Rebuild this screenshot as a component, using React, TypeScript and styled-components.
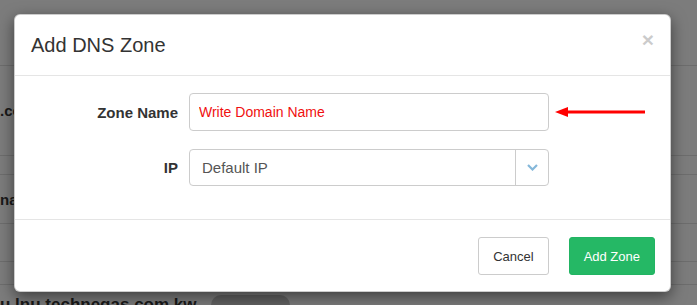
import React from 'react';
import styled, { createGlobalStyle } from 'styled-components';

const GlobalStyle = createGlobalStyle`
  html, body {
    margin: 0;
    padding: 0;
    width: 697px;
    height: 305px;
    overflow: hidden;
    font-family: 'Liberation Sans', Arial, sans-serif;
  }
`;

const Screen = styled.div`
  position: relative;
  width: 697px;
  height: 305px;
  overflow: hidden;
`;

// page behind the modal
const Page = styled.div`
  background: #f8f8f8;
  height: 100%;
  color: #333;
`;

const PageRow = styled.div<{ $h: number }>`
  height: ${(p) => p.$h}px;
  border-bottom: 1px solid #dadada;
  box-sizing: border-box;
  display: flex;
  align-items: center;
  font-weight: bold;
  font-size: 15px;
`;

const LastRow = styled.div`
  display: flex;
  align-items: center;
  gap: 14px;
  padding-top: 10px;
  font-weight: bold;
  font-size: 17px;
`;

const Pill = styled.span`
  display: inline-block;
  width: 79px;
  height: 20px;
  border-radius: 10px;
  background: #c4c4c4;
`;

const Backdrop = styled.div`
  position: absolute;
  inset: 0;
  background: rgba(0, 0, 0, 0.5);
`;

const Modal = styled.div`
  position: absolute;
  left: 14px;
  top: 14px;
  width: 657px;
  box-sizing: border-box;
  background: #fff;
  border: 1px solid rgba(0, 0, 0, 0.2);
  border-radius: 6px;
  box-shadow: 0 5px 15px rgba(0, 0, 0, 0.5);
`;

const Header = styled.div`
  display: flex;
  align-items: center;
  justify-content: space-between;
  padding: 15px 16px 15px 16px;
  border-bottom: 1px solid #e5e5e5;
`;

const Title = styled.h4`
  margin: 0;
  font-size: 20px;
  font-weight: normal;
  line-height: 30px;
  color: #333;
`;

const Close = styled.button`
  border: 0;
  background: none;
  padding: 0;
  margin-top: -12px;
  font-family: 'Liberation Sans', Arial, sans-serif;
  font-size: 21px;
  font-weight: bold;
  line-height: 1;
  color: #000;
  opacity: 0.2;
  cursor: pointer;
`;

const Body = styled.div`
  display: grid;
  grid-template-columns: 163px 360px 1fr;
  column-gap: 11px;
  row-gap: 18px;
  align-items: center;
  padding: 17px 0 33px;
`;

const Label = styled.label`
  text-align: right;
  font-size: 15px;
  font-weight: bold;
  color: #333;
`;

const Input = styled.input`
  box-sizing: border-box;
  width: 100%;
  height: 38px;
  padding: 0 9px;
  border: 1px solid #ccc;
  border-radius: 4px;
  font-family: 'Liberation Sans', Arial, sans-serif;
  font-size: 14px;
  color: #f01010;
  outline: none;
  &::placeholder {
    color: #f01010;
  }
`;

const Select = styled.div`
  box-sizing: border-box;
  display: flex;
  height: 37px;
  border: 1px solid #ccc;
  border-radius: 4px;
`;

const SelectValue = styled.div`
  flex: 1;
  display: flex;
  align-items: center;
  padding-left: 12px;
  font-size: 15px;
  color: #555;
`;

const SelectToggle = styled.div`
  width: 32px;
  border-left: 1px solid #ccc;
  display: flex;
  align-items: center;
  justify-content: center;
`;

const Pointer = styled.svg`
  display: block;
  margin-left: -5px;
`;

const Footer = styled.div`
  display: flex;
  justify-content: flex-end;
  gap: 20px;
  padding: 17px 15px 16px;
  border-top: 1px solid #e5e5e5;
`;

const Button = styled.button<{ $primary?: boolean }>`
  box-sizing: border-box;
  height: 38px;
  padding: 0 14px;
  border-radius: 3px;
  border: 1px solid ${(p) => (p.$primary ? '#22b463' : '#ccc')};
  background: ${(p) => (p.$primary ? '#25b865' : '#fff')};
  color: ${(p) => (p.$primary ? '#fff' : '#333')};
  font-family: 'Liberation Sans', Arial, sans-serif;
  font-size: 13px;
  cursor: pointer;
`;

export default function App() {
  return (
    <Screen>
      <GlobalStyle />
      <Page>
        <PageRow $h={66} />
        <PageRow $h={90}>.com.kw</PageRow>
        <PageRow $h={19} />
        <PageRow $h={49}>name</PageRow>
        <PageRow $h={38} />
        <PageRow $h={23} />
        <LastRow>
          <span>u.lnu.technegas.com.kw</span>
          <Pill />
        </LastRow>
      </Page>
      <Backdrop />
      <Modal>
        <Header>
          <Title>Add DNS Zone</Title>
          <Close aria-label="Close">×</Close>
        </Header>
        <Body>
          <Label>Zone Name</Label>
          <Input placeholder="Write Domain Name" />
          <Pointer width="92" height="12" viewBox="0 0 92 12">
            <polygon points="0,6 13,1 13,11" fill="#f00" />
            <rect x="10" y="4.5" width="80" height="3" fill="#f00" />
          </Pointer>
          <Label>IP</Label>
          <Select>
            <SelectValue>Default IP</SelectValue>
            <SelectToggle>
              <svg width="11" height="7" viewBox="0 0 11 7">
                <polyline points="1,1 5.5,5.5 10,1" fill="none" stroke="#85b8da" strokeWidth="2.2" />
              </svg>
            </SelectToggle>
          </Select>
          <span />
        </Body>
        <Footer>
          <Button>Cancel</Button>
          <Button $primary>Add Zone</Button>
        </Footer>
      </Modal>
    </Screen>
  );
}
